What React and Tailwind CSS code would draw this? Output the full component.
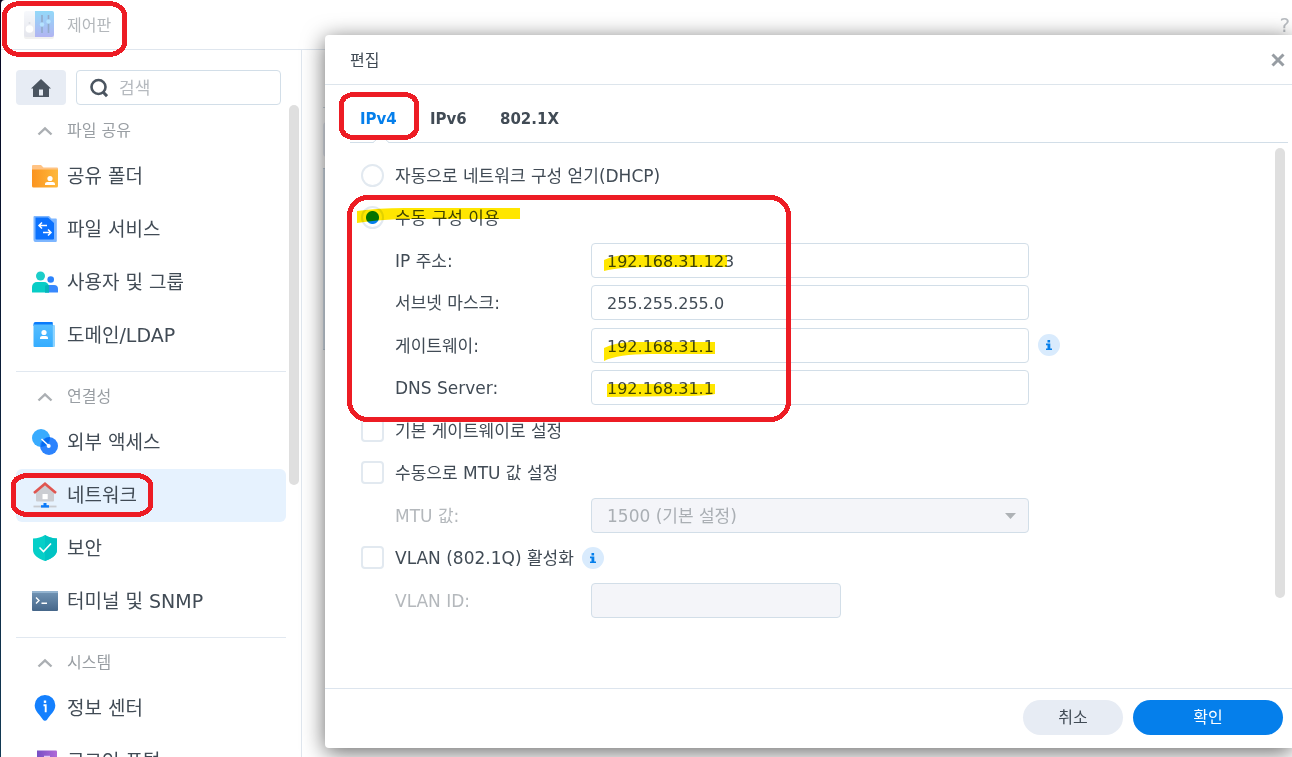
import React from "react";

function ControlPanelIcon() {
  return (
    <svg width="32" height="30" viewBox="0 0 32 30" className="opacity-60" aria-hidden="true">
      <defs>
        <linearGradient id="cp-blue" x1="0" y1="0" x2="0" y2="1">
          <stop offset="0" stopColor="#4cc0f6" />
          <stop offset="1" stopColor="#7f83ea" />
        </linearGradient>
        <linearGradient id="cp-white" x1="0" y1="0" x2="0" y2="1">
          <stop offset="0" stopColor="#f2f5fb" />
          <stop offset="1" stopColor="#d3d5e0" />
        </linearGradient>
      </defs>
      <rect x="1" y="2" width="30" height="27" rx="2" fill="#dcdcdc" opacity="0.7" />
      <path d="M3 1h9v26H3a2 2 0 0 1-2-2V3a2 2 0 0 1 2-2z" fill="url(#cp-white)" />
      <path d="M12 1h17a2 2 0 0 1 2 2v22a2 2 0 0 1-2 2H12z" fill="url(#cp-blue)" />
      <circle cx="6.500" cy="19" r="3.800" fill="#fff" />
      <circle cx="6.500" cy="13" r="1" fill="#c4c8d2" />
      <path d="M19 5v18M25.500 5v18" stroke="#4a72a8" strokeWidth="1.600" />
      <circle cx="19" cy="14.500" r="2.200" fill="#84d0ff" />
      <circle cx="25.500" cy="11.500" r="2.200" fill="#84d0ff" />
    </svg>
  );
}

function FolderIcon() {
  return (
    <svg width="26" height="26" viewBox="0 0 26 26" aria-hidden="true">
      <defs>
        <linearGradient id="folder-g" x1="0" y1="0" x2="1" y2="0">
          <stop offset="0" stopColor="#fb9420" />
          <stop offset="1" stopColor="#feb93c" />
        </linearGradient>
      </defs>
      <path d="M0 3a1 1 0 0 1 1-1h8l2.500 2.500H25a1 1 0 0 1 1 1V10H0z" fill="#ffc384" />
      <path d="M0 6.500h26V23a1.500 1.500 0 0 1-1.500 1.500h-23A1.500 1.500 0 0 1 0 23z" fill="url(#folder-g)" />
      <circle cx="18" cy="15.500" r="2.600" fill="#fff" />
      <path d="M13 22v-.8c0-1.400 1-2.200 2.300-2.200h5.400c1.300 0 2.300.8 2.300 2.200v.8z" fill="#fff" />
    </svg>
  );
}

function FileServiceIcon() {
  return (
    <svg width="26" height="26" viewBox="0 0 26 26" aria-hidden="true">
      <path d="M2.500 0H17l2.500 2.500H24a.8.800 0 0 1 .8.800V25a1 1 0 0 1-1 1H3.500a2 2 0 0 1-2-2V1a1 1 0 0 1 1-1z" fill="#7db6ff" />
      <path d="M3.500 1.500H16L22 7v15.500a1 1 0 0 1-1 1H4.500a1 1 0 0 1-1-1z" fill="#0a71fe" />
      <path d="M10 6.500 7 9.500l3 3M7 9.500h8M16 13.500l3 3-3 3M19 16.500h-8" fill="none" stroke="#fff" strokeWidth="1.500" />
    </svg>
  );
}

function UsersIcon() {
  return (
    <svg width="26" height="26" viewBox="0 0 26 26" aria-hidden="true">
      <circle cx="8.500" cy="7" r="4.500" fill="#1bcdc9" />
      <circle cx="18.700" cy="10.500" r="3.300" fill="#2b83fc" />
      <path d="M13 23.500V20a4 4 0 0 1 4-4h5a4 4 0 0 1 4 4v3a.5.500 0 0 1-.5.500z" fill="#3888fd" />
      <path d="M0 23V18a5 5 0 0 1 5-5h7a5 5 0 0 1 5 5v5a.5.500 0 0 1-.5.500H.5A.5.500 0 0 1 0 23z" fill="#08cdc6" />
      <path d="M13 16.800c1-.7 2-1 4-.8.300 1 .200 5 0 7.500h-4z" fill="#06b5ba" />
    </svg>
  );
}

function DomainIcon() {
  return (
    <svg width="26" height="26" viewBox="0 0 26 26" aria-hidden="true">
      <defs>
        <linearGradient id="domain-g" x1="0" y1="0" x2="0" y2="1">
          <stop offset="0" stopColor="#55bdff" />
          <stop offset="1" stopColor="#35adff" />
        </linearGradient>
      </defs>
      <path d="M4 3h18a1 1 0 0 1 1 1v20a1 1 0 0 1-1 1H4z" fill="#8ed4ff" />
      <path d="M3.500 0H20a.8.800 0 0 1 .8.800V4H1.500V2a2 2 0 0 1 2-2z" fill="#0a7bfb" />
      <path d="M1.500 2.500h19.300V25H2.500a1 1 0 0 1-1-1z" fill="url(#domain-g)" />
      <circle cx="12" cy="10.500" r="2.600" fill="#fff" />
      <path d="M8 17v-1c0-1.300.9-2 2.200-2h3.600c1.300 0 2.200.7 2.200 2v1z" fill="#fff" />
    </svg>
  );
}

function ExternalAccessIcon() {
  return (
    <svg width="26" height="26" viewBox="0 0 26 26" aria-hidden="true">
      <circle cx="9" cy="9" r="9" fill="#38abfe" />
      <circle cx="17" cy="17" r="9" fill="#2c83fd" />
      <path d="M18 8.100A9 9 0 0 1 9 18a9 9 0 0 1 9-9.900z" fill="#056cf2" />
      <path d="M9.500 10 17 17" stroke="#fff" strokeWidth="1.500" />
      <circle cx="16.700" cy="17" r="2" fill="#fff" />
    </svg>
  );
}

function NetworkIcon() {
  return (
    <svg width="26" height="26" viewBox="0 0 26 26" aria-hidden="true">
      <path d="M4 9.500 13 3l9 6.500V18.500a1 1 0 0 1-1 1H5a1 1 0 0 1-1-1z" fill="#cbcdd2" />
      <path d="M2 11 13 1.800 24 11" fill="none" stroke="#e05550" strokeWidth="2.600" />
      <rect x="10.500" y="12" width="5.200" height="5.200" fill="#fff" />
      <path d="M1.500 24.500h23" stroke="#c8cbd0" strokeWidth="1.800" />
      <path d="M13 21v3.500" stroke="#0c7bf9" strokeWidth="3" />
      <path d="M9 24.400h8" stroke="#0c7bf9" strokeWidth="2.400" />
    </svg>
  );
}

function SecurityIcon() {
  return (
    <svg width="26" height="26" viewBox="0 0 26 26" aria-hidden="true">
      <path d="M13 0c3.500 2.300 7.500 3.300 12 3.600V15c0 5-5 8.500-12 11C6 23.500 1 20 1 15V3.600C5.500 3.300 9.500 2.300 13 0z" fill="#05cfc8" />
      <path d="M13 0c3.500 2.300 7.500 3.300 12 3.600V15c0 5-5 8.500-12 11z" fill="#00c3c3" />
      <path d="m7.500 12.500 4 4 7.500-8" fill="none" stroke="#fff" strokeWidth="1.600" />
    </svg>
  );
}

function TerminalIcon() {
  return (
    <svg width="26" height="26" viewBox="0 0 26 26" aria-hidden="true">
      <defs>
        <linearGradient id="term-g" x1="0" y1="0" x2="0" y2="1">
          <stop offset="0" stopColor="#7396b6" />
          <stop offset="1" stopColor="#456689" />
        </linearGradient>
      </defs>
      <rect x="0" y="3" width="26" height="20" rx="1" fill="url(#term-g)" />
      <path d="M0 4a1 1 0 0 1 1-1h24a1 1 0 0 1 1 1v1H0z" fill="#93b3cf" />
      <path d="m4 9.500 3 3-3 3M9.500 15.300H15" fill="none" stroke="#fff" strokeWidth="1.400" />
    </svg>
  );
}

function InfoCenterIcon() {
  return (
    <svg width="26" height="26" viewBox="0 0 26 26" aria-hidden="true">
      <path d="M13 0a10.300 10.300 0 0 1 10.300 10.500c0 5.500-5.300 9.500-8.300 14.300-.8 1.400-3.200 1.400-4 0-3-4.800-8.300-8.800-8.300-14.300A10.300 10.300 0 0 1 13 0z" fill="#1480fe" />
      <path d="M11.500 10.300h2.200v7" fill="none" stroke="#fff" strokeWidth="1.900" />
      <rect x="11.800" y="5.500" width="2.400" height="2.400" fill="#fff" />
    </svg>
  );
}

function LoginPortalIcon() {
  return (
    <svg width="26" height="26" viewBox="0 0 26 26" aria-hidden="true">
      <defs>
        <linearGradient id="login-g" x1="0" y1="0" x2="1" y2="0">
          <stop offset="0" stopColor="#774fc4" />
          <stop offset="1" stopColor="#b06ad8" />
        </linearGradient>
      </defs>
      <path d="M5 2.500h19a1 1 0 0 1 1 1V25H5z" fill="url(#login-g)" />
      <path d="M12 8.500h6" stroke="#e2c8f4" strokeWidth="1.500" />
    </svg>
  );
}

const sections = [
  {
    title: "파일 공유",
    items: [
      { label: "공유 폴더", Icon: FolderIcon },
      { label: "파일 서비스", Icon: FileServiceIcon },
      { label: "사용자 및 그룹", Icon: UsersIcon },
      { label: "도메인/LDAP", Icon: DomainIcon },
    ],
  },
  {
    title: "연결성",
    items: [
      { label: "외부 액세스", Icon: ExternalAccessIcon },
      { label: "네트워크", Icon: NetworkIcon, active: true },
      { label: "보안", Icon: SecurityIcon },
      { label: "터미널 및 SNMP", Icon: TerminalIcon },
    ],
  },
  {
    title: "시스템",
    items: [
      { label: "정보 센터", Icon: InfoCenterIcon },
      { label: "로그인 포털", Icon: LoginPortalIcon },
    ],
  },
];

function SidebarSection({ title, items }) {
  return (
    <section className="mb-[5px] border-b border-[#e1e8f0] pb-[9px]">
      <button type="button" className="flex h-[39px] w-full items-center gap-[14px] pl-[21px] text-base text-[#999ea3]">
        <svg width="16" height="10" viewBox="0 0 16 10" aria-hidden="true">
          <path d="M1.500 8.500 8 2.300l6.500 6.200" fill="none" stroke="#abafb3" strokeWidth="2.400" />
        </svg>
        {title}
      </button>
      <ul>
        {items.map(({ label, Icon, active }) => (
          <li key={label}>
            <a
              href="#"
              aria-current={active ? "page" : undefined}
              className={
                active
                  ? "flex h-[53px] items-center gap-[9px] rounded-md bg-[#e6f2fe] pb-[2px] pl-4"
                  : "flex h-[53px] items-center gap-[9px] rounded-md pb-[2px] pl-4"
              }
            >
              <Icon />
              <span className="text-[19px] leading-6 whitespace-nowrap">{label}</span>
            </a>
          </li>
        ))}
      </ul>
    </section>
  );
}

function Sidebar() {
  return (
    <aside className="flex w-[301px] shrink-0 flex-col overflow-hidden border-r border-[#dfe6ee] pt-5 pl-[15px]">
      <div className="flex h-[35px] shrink-0 gap-[10px] pr-5">
        <button type="button" aria-label="홈" className="flex w-[50px] items-center justify-center rounded bg-[#e7ecf4]">
          <svg width="20" height="18" viewBox="0 0 20 18" aria-hidden="true">
            <path d="M10 0 20 9.500h-2V18H12v-7.500H8V18H2V9.500H0z" fill="#4b5560" />
            <path d="M2 16.500h16V18H2z" fill="#4b5560" />
          </svg>
        </button>
        <label className="flex min-w-0 flex-1 items-center gap-[11px] rounded border border-[#d2dee8] bg-white pl-[13px]">
          <svg width="18" height="20" viewBox="0 0 18 20" className="shrink-0" aria-hidden="true">
            <circle cx="8.500" cy="9" r="7" fill="none" stroke="#4b5560" strokeWidth="2.600" />
            <path d="m13 14 4 4.200" stroke="#4b5560" strokeWidth="3" />
          </svg>
          <input type="text" aria-label="검색" placeholder="검색" className="w-full min-w-0 pt-[2px] text-[17px] outline-none placeholder:text-[#b6babf]" />
        </label>
      </div>
      <div className="flex min-h-0 flex-1 gap-[3px] pr-[2px]">
        <nav className="min-w-0 flex-1 overflow-hidden pt-[6px]">
          {sections.map((s) => (
            <SidebarSection key={s.title} title={s.title} items={s.items} />
          ))}
        </nav>
        <div className="h-[380px] w-[10px] rounded-full bg-[#dfdfdf]" />
      </div>
    </aside>
  );
}

function InfoBadge() {
  return (
    <button type="button" aria-label="정보" className="flex size-[22px] shrink-0 items-center justify-center rounded-full bg-[#d9ebfd]">
      <svg width="6" height="10" viewBox="0 0 6 10" aria-hidden="true">
        <path d="M1.500 0h2.600v2.400H1.500zM0 3.600h4.300v4.800H6V10H0V8.400h1.500V5.200H0z" fill="#057feb" />
      </svg>
    </button>
  );
}

function Row({ children }) {
  return (
    <div className="h-[42px] pt-1 even:h-[43px]">
      <div className="flex h-[35px] items-center">{children}</div>
    </div>
  );
}

const radioBox =
  "size-[23px] shrink-0 appearance-none rounded-full border-2 border-[#e2e9f0] bg-white checked:bg-[radial-gradient(circle,#057feb_6px,transparent_7px)]";
const checkBox = "size-[23px] shrink-0 appearance-none rounded border-2 border-[#e2e9f0] bg-white";

function Choice({ id, type, label, defaultChecked, children }) {
  return (
    <Row>
      <input
        id={id}
        type={type}
        name={type === "radio" ? "mode" : id}
        defaultChecked={defaultChecked}
        className={type === "radio" ? radioBox : checkBox}
      />
      <label htmlFor={id} className="pt-[2px] pl-[11px] whitespace-nowrap">
        {label}
      </label>
      {children}
    </Row>
  );
}

function Field({ id, label, value, info }) {
  return (
    <Row>
      <label htmlFor={id} className="w-[230px] shrink-0 pt-[2px] pl-[34px]">
        {label}
      </label>
      <input
        id={id}
        type="text"
        defaultValue={value}
        className="h-[35px] w-[438px] min-w-0 rounded border border-[#d2dee8] bg-white px-[15px] pt-[2px] text-base outline-none"
      />
      {info && (
        <span className="flex pb-px pl-[9px]">
          <InfoBadge />
        </span>
      )}
    </Row>
  );
}

function EditDialog() {
  return (
    <div
      role="dialog"
      aria-labelledby="dialog-title"
      className="absolute top-[35px] right-0 bottom-[9px] left-[325px] flex flex-col rounded-l bg-white shadow-[0_4px_22px_rgba(0,0,0,0.6)]"
    >
      <header className="flex h-[50px] shrink-0 items-center justify-between border-b border-[#dde5ec] pr-[7px] pl-[25px]">
        <h1 id="dialog-title" className="pt-[2px] text-base">
          편집
        </h1>
        <button type="button" aria-label="닫기">
          <svg width="14" height="14" viewBox="0 0 14 14" aria-hidden="true">
            <path d="m1.500 1.500 11 11M12.500 1.500l-11 11" stroke="#979da3" strokeWidth="3" />
          </svg>
        </button>
      </header>
      <div role="tablist" className="relative mr-1 ml-[25px] flex h-[58px] shrink-0 border-b border-[#d2dee8] pt-3 text-[15px] font-bold">
        <button type="button" role="tab" aria-selected="true" className="w-[70px] pl-[10px] text-left text-[#057feb]">
          IPv4
        </button>
        <button type="button" role="tab" aria-selected="false" className="w-[70px] pl-[10px] text-left">
          IPv6
        </button>
        <button type="button" role="tab" aria-selected="false" className="w-20 pl-[10px] text-left">
          802.1X
        </button>
        <svg className="absolute -bottom-px left-[22px]" width="18" height="8" viewBox="0 0 18 8" aria-hidden="true">
          <path d="M1 8 9 .7 17 8z" fill="#fff" />
          <path d="M1 7.500 9 .7l8 6.800" fill="none" stroke="#d2dee8" />
        </svg>
      </div>
      <div className="flex min-h-0 flex-1 justify-between pr-[7px] pl-9">
        <form className="min-w-0 flex-1 overflow-hidden pt-[11px] text-[17px]">
          <Choice id="dhcp" type="radio" label="자동으로 네트워크 구성 얻기(DHCP)" />
          <Choice id="manual" type="radio" label="수동 구성 이용" defaultChecked />
          <Field id="ip" label="IP 주소:" value="192.168.31.123" />
          <Field id="mask" label="서브넷 마스크:" value="255.255.255.0" />
          <Field id="gateway" label="게이트웨이:" value="192.168.31.1" info />
          <Field id="dns" label="DNS Server:" value="192.168.31.1" />
          <Choice id="default-gateway" type="checkbox" label="기본 게이트웨이로 설정" />
          <Choice id="manual-mtu" type="checkbox" label="수동으로 MTU 값 설정" />
          <Row>
            <label htmlFor="mtu" className="w-[230px] shrink-0 pt-[2px] pl-[34px] text-[#b4b8bc]">
              MTU 값:
            </label>
            <div className="relative w-[438px] min-w-0">
              <select
                id="mtu"
                disabled
                className="h-[35px] w-full appearance-none rounded border border-[#d2dee8] bg-[#f4f5f9] px-[15px] pt-[2px] text-[#aaafb4] opacity-100"
              >
                <option>1500 (기본 설정)</option>
              </select>
              <svg className="pointer-events-none absolute top-[15px] right-[13px]" width="11" height="6" viewBox="0 0 11 6" aria-hidden="true">
                <path d="M0 0h11L5.500 6z" fill="#aeb2b6" />
              </svg>
            </div>
          </Row>
          <Choice id="vlan" type="checkbox" label="VLAN (802.1Q) 활성화">
            <span className="flex pl-2">
              <InfoBadge />
            </span>
          </Choice>
          <Row>
            <label htmlFor="vlan-id" className="w-[230px] shrink-0 pt-[2px] pl-[34px] text-[#b4b8bc]">
              VLAN ID:
            </label>
            <input id="vlan-id" type="text" disabled className="h-[35px] w-[250px] rounded border border-[#d2dee8] bg-[#f4f5f9] px-[15px]" />
          </Row>
        </form>
        <div className="mt-[5px] h-[450px] w-[10px] rounded-full bg-[#dfdfdf]" />
      </div>
      <footer className="flex h-[60px] shrink-0 items-start justify-end gap-[10px] border-t border-[#dde5ee] pt-[11px] pr-[9px] text-base">
        <button type="button" className="h-[35px] w-[100px] rounded-full bg-[#e7ecf4]">
          취소
        </button>
        <button type="button" className="h-[35px] w-[150px] rounded-full bg-[#057feb] text-white">
          확인
        </button>
      </footer>
    </div>
  );
}

function Annotations() {
  return (
    <>
      <svg className="pointer-events-none absolute top-0 left-0 mix-blend-multiply" width="800" height="430" viewBox="0 0 800 430" aria-hidden="true">
        <g fill="#ffe600">
          <path d="M357 211Q378 208 405 208H520V219H400Q375 220 357 223z" />
          <path d="M604 260Q612 256 624 255H727V267H650Q620 267 604 271z" />
          <path d="M604 348Q614 343 630 342H715V354H650Q618 354 604 361z" />
          <path d="M607 384H715V394Q705 396 680 396L607 397z" />
        </g>
      </svg>
      <svg className="pointer-events-none absolute top-0 left-0" width="800" height="530" viewBox="0 0 800 530" aria-hidden="true">
        <g fill="none" stroke="#ed1c24" strokeWidth="5" shapeRendering="crispEdges">
          <rect x="4.500" y="3.500" width="120" height="51" rx="16" ry="12" />
          <rect x="341.500" y="94.500" width="75" height="43" rx="12" ry="10" />
          <rect x="349.500" y="197.500" width="439" height="222" rx="18" ry="18" />
          <rect x="13.500" y="475.500" width="137" height="39" rx="15" ry="9" />
        </g>
      </svg>
    </>
  );
}

export default function App() {
  return (
    <div className="relative isolate h-screen overflow-hidden bg-linear-to-b from-[#05051f] to-[#123a55] pl-px font-['DejaVu_Sans','Noto_Sans_CJK_KR',sans-serif] text-[#414b55]">
      <div className="flex h-full flex-col rounded-tl bg-white">
        <header className="flex h-[50px] shrink-0 items-center justify-between border-b border-[#dfe6ee] pr-[2px] pl-[22px]">
          <div className="flex items-center gap-3 text-base text-[#b3b7bb]">
            <ControlPanelIcon />
            <span className="pt-[2px]">제어판</span>
          </div>
          <button type="button" aria-label="도움말" className="text-xl leading-5 text-[#b9bdc2]">
            ?
          </button>
        </header>
        <div className="flex min-h-0 flex-1">
          <Sidebar />
          <main className="min-w-0 flex-1 pt-[57px] pl-[21px]">
            <div className="h-[15px] border-t border-[#cfd9e3]" />
            <div className="h-[35px] rounded bg-[#e7ecf4]" />
            <div className="mt-[11px] h-[182px] border-y border-[#c4d2df] bg-[#dbe6f1]" />
          </main>
        </div>
      </div>
      <EditDialog />
      <Annotations />
    </div>
  );
}
